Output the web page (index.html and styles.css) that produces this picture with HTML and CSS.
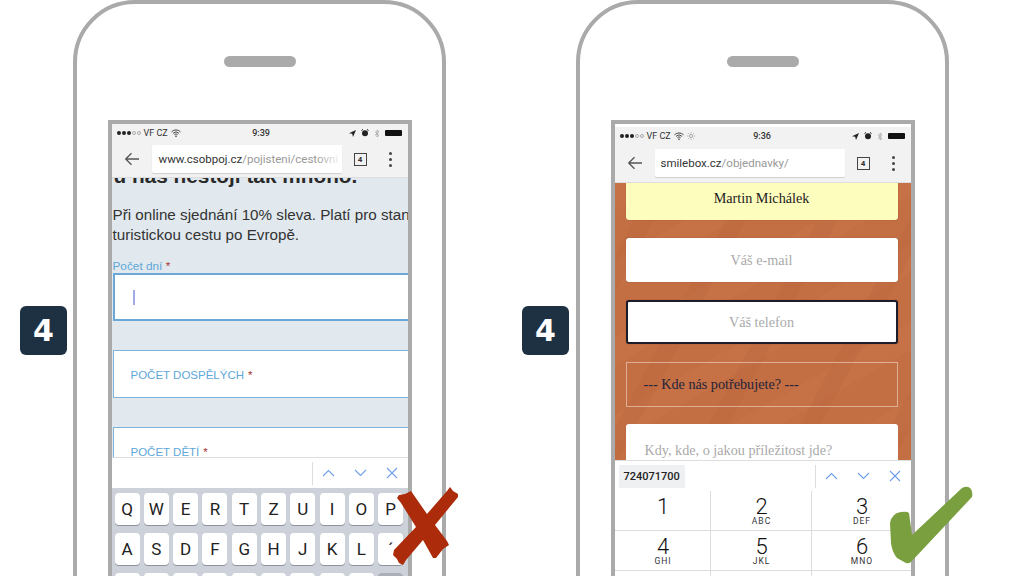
FILE: index.html
```html
<!DOCTYPE html>
<html lang="en">
<head>
<meta charset="UTF-8">
<title>Formuláře na mobilu</title>
<link rel="stylesheet" href="styles.css">
</head>
<body>

<div class="slide">

  <section class="panel panel-bad">
    <div class="badge">4</div>
    <div class="phone">
      <div class="speaker"></div>
      <div class="screen">
        <div class="status">
          <div class="status-side">
            <span class="signal"><i></i><i></i><i></i><i class="off"></i><i class="off"></i></span>
            <span>VF CZ</span>
            <svg class="wifi" width="10" height="8" viewBox="0 0 10 8"><path d="M.5 2.8a6.4 6.4 0 0 1 9 0M2 4.3a4.3 4.3 0 0 1 6 0M3.4 5.7a2.2 2.2 0 0 1 3.2 0" fill="none" stroke="#333" stroke-width=".9"/><circle cx="5" cy="7.2" r=".8" fill="#333"/></svg>
          </div>
          <span class="time">9:39</span>
          <div class="status-side status-right">
            <svg width="7" height="7" viewBox="0 0 7 7"><path d="M7 0 0 3.2l3.2.5L4 7z" fill="#222"/></svg>
            <svg width="8" height="8" viewBox="0 0 8 8"><circle cx="4" cy="4.3" r="3" fill="#222"/><path d="M.5 1.5 2 .4M7.500 1.500 6 .4" stroke="#222"/></svg>
            <svg width="6" height="9" viewBox="0 0 6 9"><path d="M.8 2.500 5 6.300 3 8V1l2 1.700L.8 6.500" fill="none" stroke="#999" stroke-width=".7"/></svg>
            <span class="battery"></span>
          </div>
        </div>
        <div class="toolbar">
          <svg class="back" width="16" height="14" viewBox="0 0 16 14"><path d="M15 7H2M7.500 1.200 1.700 7l5.800 5.800" fill="none" stroke="#555" stroke-width="1.300"/></svg>
          <div class="url url-long"><b>www.csobpoj.cz</b>/pojisteni/cestovni</div>
          <span class="tabs">4</span>
          <span class="menu"><i></i><i></i><i></i></span>
        </div>
        <div class="page page-csob">
          <h1 class="csob-title">u nás nestojí tak mnoho.</h1>
          <p class="csob-text">Při online sjednání 10% sleva. Platí pro stan<br>turistickou cestu po Evropě.</p>
          <div class="csob-label">Počet dní <em>*</em></div>
          <div class="csob-field csob-focus"><span class="caret"></span></div>
          <div class="csob-field">POČET DOSPĚLÝCH <em>*</em></div>
          <div class="csob-field">POČET DĚTÍ <em>*</em></div>
        </div>
        <div class="accessory">
          <span class="arrows">
            <svg width="13" height="8" viewBox="0 0 13 8"><path d="M1 7 6.500 1.500 12 7" fill="none" stroke="#6f9fe8" stroke-width="1.100"/></svg>
            <svg width="13" height="8" viewBox="0 0 13 8"><path d="M1 1l5.500 5.500L12 1" fill="none" stroke="#6f9fe8" stroke-width="1.100"/></svg>
            <svg width="12" height="12" viewBox="0 0 12 12"><path d="M1 1l10 10M11 1 1 11" fill="none" stroke="#6f9fe8" stroke-width="1.100"/></svg>
          </span>
        </div>
        <div class="keyboard">
          <span class="key">Q</span><span class="key">W</span><span class="key">E</span><span class="key">R</span><span class="key">T</span><span class="key">Z</span><span class="key">U</span><span class="key">I</span><span class="key">O</span><span class="key">P</span>
          <span class="key">A</span><span class="key">S</span><span class="key">D</span><span class="key">F</span><span class="key">G</span><span class="key">H</span><span class="key">J</span><span class="key">K</span><span class="key">L</span><span class="key">´</span>
          <span class="key"></span><span class="key"></span><span class="key"></span><span class="key"></span><span class="key"></span><span class="key"></span><span class="key"></span><span class="key"></span><span class="key"></span><span class="key key-dark"></span>
        </div>
      </div>
    </div>
  </section>

  <section class="panel panel-good">
    <div class="badge">4</div>
    <div class="phone">
      <div class="speaker"></div>
      <div class="screen screen-low">
        <div class="status">
          <div class="status-side">
            <span class="signal"><i></i><i></i><i></i><i class="off"></i><i class="off"></i></span>
            <span>VF CZ</span>
            <svg class="wifi" width="10" height="8" viewBox="0 0 10 8"><path d="M.5 2.8a6.4 6.4 0 0 1 9 0M2 4.3a4.3 4.3 0 0 1 6 0M3.4 5.7a2.2 2.2 0 0 1 3.2 0" fill="none" stroke="#333" stroke-width=".9"/><circle cx="5" cy="7.2" r=".8" fill="#333"/></svg>
            <svg width="8" height="8" viewBox="0 0 8 8"><circle cx="4" cy="4" r="1.600" fill="none" stroke="#888" stroke-width=".7"/><path d="M4 0v1.300M4 6.700V8M0 4h1.300M6.700 4H8M1.200 1.200l.9.9M5.900 5.900l.9.9M6.800 1.200l-.9.9M2.100 5.900l-.9.9" stroke="#888" stroke-width=".6"/></svg>
          </div>
          <span class="time">9:36</span>
          <div class="status-side status-right">
            <svg width="7" height="7" viewBox="0 0 7 7"><path d="M7 0 0 3.2l3.2.5L4 7z" fill="#222"/></svg>
            <svg width="8" height="8" viewBox="0 0 8 8"><circle cx="4" cy="4.3" r="3" fill="#222"/><path d="M.5 1.5 2 .4M7.500 1.500 6 .4" stroke="#222"/></svg>
            <svg width="6" height="9" viewBox="0 0 6 9"><path d="M.8 2.500 5 6.300 3 8V1l2 1.700L.8 6.500" fill="none" stroke="#999" stroke-width=".7"/></svg>
            <span class="battery"></span>
          </div>
        </div>
        <div class="toolbar toolbar-tall">
          <svg class="back" width="16" height="14" viewBox="0 0 16 14"><path d="M15 7H2M7.500 1.200 1.700 7l5.800 5.800" fill="none" stroke="#555" stroke-width="1.300"/></svg>
          <div class="url"><b>smilebox.cz</b>/objednavky/</div>
          <span class="tabs">4</span>
          <span class="menu"><i></i><i></i><i></i></span>
        </div>
        <div class="page page-smile">
          <div class="smile-field smile-filled">Martin Michálek</div>
          <div class="smile-field">Váš e-mail</div>
          <div class="smile-field smile-focus">Váš telefon</div>
          <div class="smile-select">--- Kde nás potřebujete? ---</div>
          <div class="smile-area">Kdy, kde, o jakou příležitost jde?</div>
        </div>
        <div class="accessory accessory-chip">
          <span class="chip">724071700</span>
          <span class="arrows">
            <svg width="13" height="8" viewBox="0 0 13 8"><path d="M1 7 6.500 1.500 12 7" fill="none" stroke="#6f9fe8" stroke-width="1.100"/></svg>
            <svg width="13" height="8" viewBox="0 0 13 8"><path d="M1 1l5.500 5.500L12 1" fill="none" stroke="#6f9fe8" stroke-width="1.100"/></svg>
            <svg width="12" height="12" viewBox="0 0 12 12"><path d="M1 1l10 10M11 1 1 11" fill="none" stroke="#6f9fe8" stroke-width="1.100"/></svg>
          </span>
        </div>
        <div class="keypad">
          <div class="pad"><span class="num">1</span></div>
          <div class="pad"><span class="num">2</span><span class="abc">ABC</span></div>
          <div class="pad"><span class="num">3</span><span class="abc">DEF</span></div>
          <div class="pad"><span class="num">4</span><span class="abc">GHI</span></div>
          <div class="pad"><span class="num">5</span><span class="abc">JKL</span></div>
          <div class="pad"><span class="num">6</span><span class="abc">MNO</span></div>
          <div class="pad"></div>
          <div class="pad"></div>
          <div class="pad"></div>
        </div>
      </div>
    </div>
  </section>

  <svg class="mark mark-cross" width="70" height="84" viewBox="390 484 70 84">
    <path d="M399 495l6-1 6-3 16 23 20-23 3-4 3 4 5 3v3l-23 28 12 16 2 4-6 4-7 9h-3l-10-18-17 20-3 5-4-2-2-4-4-4 1-5 22-23-15-24-4-5z" fill="#ab2b0a"/>
  </svg>
  <svg class="mark mark-check" width="86" height="80" viewBox="888 485 86 80">
    <path d="M962 488Q968 485 971 489Q973 493 972 497L911 562Q908 564 906 563L897 558Q892 552 891 543L890 523Q892 513 901 512Q907 511 909 513L912 535z" fill="#7a9f3f"/>
  </svg>

</div>

</body>
</html>
```

FILE: styles.css
```css
* {
    box-sizing: border-box;
}
html, body {
    margin: 0;
    padding: 0;
    height: 576px;
    overflow: hidden;
    background: #fff;
    font-family: "Liberation Sans", Arial, sans-serif;
}
.slide {
    position: relative;
    display: flex;
    width: 1024px;
    height: 576px;
    padding-left: 20px;
    gap: 76px;
    overflow: hidden;
}
.panel {
    display: flex;
    align-items: flex-start;
    gap: 6px;
}
.panel-good {
    gap: 7px;
}
.badge {
    width: 47px;
    height: 49px;
    margin-top: 306px;
    background: #1d3143;
    border-radius: 6px;
    color: #fff;
    font-family: "DejaVu Sans", sans-serif;
    font-weight: 700;
    font-size: 30px;
    line-height: 49px;
    text-align: center;
}

/* phone outline */
.phone {
    width: 373px;
    height: 720px;
    flex: none;
    border: 4px solid #aaa;
    border-radius: 62px;
    display: flex;
    flex-direction: column;
    align-items: center;
    background: #fff;
}
.speaker {
    width: 72px;
    height: 11px;
    margin-top: 52px;
    background: #aaa;
    border-radius: 6px;
}
.screen {
    width: 304px;
    height: 456px;
    margin-top: 53px;
    border: 4px solid #aaa;
    border-bottom: 0;
    display: flex;
    flex-direction: column;
    overflow: hidden;
    flex: none;
}
.screen-low {
    padding-top: 3px;
}

/* status bar */
.status {
    height: 18px;
    flex: none;
    background: #f2f2f2;
    display: flex;
    align-items: center;
    justify-content: space-between;
    padding: 0 6px 0 5px;
    font-family: Roboto, sans-serif;
    font-size: 9px;
    color: #333;
}
.status-side {
    width: 110px;
    display: flex;
    align-items: center;
    gap: 3px;
}
.status-right {
    justify-content: flex-end;
    gap: 5px;
}
.time {
    font-weight: 500;
}
.panel-bad .time {
    margin-left: 4px;
}
.signal {
    display: flex;
    gap: 1px;
}
.signal i {
    width: 4px;
    height: 4px;
    border-radius: 50%;
    background: #222;
}
.signal i.off {
    background: none;
    border: 1px solid #aaa;
}
.battery {
    width: 17px;
    height: 6px;
    background: #111;
    border-radius: 1px;
}

/* browser toolbar */
.toolbar {
    height: 36px;
    flex: none;
    background: #f2f2f2;
    display: flex;
    align-items: flex-start;
    padding: 3px 0 0 12px;
    border-bottom: 1px solid #ddd;
}
.toolbar-tall {
    height: 38px;
    padding-top: 4px;
}
.back {
    margin-top: 7px;
    flex: none;
}
.url {
    position: relative;
    width: 190px;
    height: 28px;
    margin-left: 12px;
    padding-left: 6px;
    background: #fff;
    border-radius: 2px;
    box-shadow: 0 1px 1px rgba(0, 0, 0, 0.15);
    font-family: Roboto, sans-serif;
    font-size: 11.500px;
    line-height: 28px;
    color: #999;
    white-space: nowrap;
    overflow: hidden;
}
.url-long {
    padding-left: 7px;
}
.url b {
    font-weight: 400;
    color: #333;
}
.url::after {
    content: "";
    position: absolute;
    top: 0;
    right: 0;
    width: 26px;
    height: 100%;
    background: linear-gradient(to right, rgba(255, 255, 255, 0), #fff);
}
.tabs {
    width: 13px;
    height: 13px;
    margin: 8px 0 0 12px;
    border: 1px solid #444;
    font-family: Roboto, sans-serif;
    font-size: 8px;
    font-weight: 700;
    line-height: 11px;
    text-align: center;
    color: #333;
    flex: none;
}
.menu {
    margin: 7px 0 0 22px;
    display: flex;
    flex-direction: column;
    gap: 3px;
}
.menu i {
    width: 3px;
    height: 3px;
    border-radius: 50%;
    background: #444;
}

.page {
    flex: 1;
    min-height: 0;
    overflow: hidden;
}

/* csob page */
.page-csob {
    background: #e1e9ef;
    padding-left: 1px;
}
.csob-title {
    margin: -14px 0 0 1px;
    font-size: 20.800px;
    line-height: 24px;
    color: #2a2a2a;
    white-space: nowrap;
}
.csob-text {
    margin: 17px 0 0;
    font-size: 15.200px;
    line-height: 20px;
    color: #333;
    white-space: nowrap;
}
.csob-label {
    margin-top: 14px;
    font-size: 11.800px;
    line-height: 14px;
    color: #5ea7d8;
}
.csob-label em, .csob-field em {
    font-style: normal;
    color: #a33;
}
.csob-field {
    height: 48px;
    margin-bottom: 29px;
    padding: 2px 0 0 17px;
    background: #fff;
    border: 1px solid #7fb3da;
    border-right: 0;
    font-size: 11.500px;
    line-height: 44px;
    color: #5ea7d8;
    display: flex;
    align-items: center;
    gap: 4px;
}
.csob-focus {
    height: 48px;
    padding: 0 0 0 18px;
    border: 2px solid #6aa8d8;
    border-right: 0;
}
.caret {
    width: 2px;
    height: 15px;
    background: #a3abe6;
}

/* accessory bar above keyboards */
.accessory {
    height: 31px;
    flex: none;
    background: #fff;
    border-top: 1px solid #ddd;
    display: flex;
    align-items: center;
    justify-content: flex-end;
}
.accessory-chip {
    justify-content: space-between;
    padding-left: 4px;
}
.arrows {
    height: 23px;
    width: 96px;
    flex: none;
    padding: 0 10px 0 9px;
    border-left: 1px solid #ddd;
    display: flex;
    align-items: center;
    justify-content: space-between;
}
.chip {
    height: 23px;
    padding: 0 5px;
    background: #eef0f1;
    font-family: Roboto, sans-serif;
    font-size: 11px;
    font-weight: 500;
    line-height: 23px;
    color: #222;
}

/* qwerty keyboard */
.keyboard {
    height: 88px;
    flex: none;
    padding: 5px 3px 0 3px;
    background: #cdd2da;
    display: grid;
    grid-template-columns: repeat(10, 25px);
    grid-auto-rows: 32px;
    column-gap: 4.3px;
    row-gap: 8px;
}
.key {
    background: #fff;
    border-radius: 4px;
    box-shadow: 0 1px 0 #8e9299;
    font-family: Roboto, sans-serif;
    font-size: 17px;
    line-height: 32px;
    text-align: center;
    color: #222;
}
.key-dark {
    background: #aab0ba;
}

/* number pad */
.keypad {
    height: 85px;
    flex: none;
    overflow: hidden;
    background: #fff;
    display: grid;
    grid-template-columns: 96px 101px 1fr;
    grid-auto-rows: 40px;
}
.pad {
    display: flex;
    flex-direction: column;
    align-items: center;
    padding-left: 2px;
    border-bottom: 1px solid #ddd;
    border-right: 1px solid #ddd;
    color: #111;
    font-family: Roboto, sans-serif;
}
.pad:nth-child(3n) {
    border-right: 0;
}
.num {
    font-size: 22px;
    font-weight: 300;
    line-height: 20px;
    margin-top: 6px;
}
.abc {
    font-size: 8.500px;
    letter-spacing: 1px;
    line-height: 9px;
    color: #333;
}

/* smilebox page */
.page-smile {
    background-color: #c46e43;
    background-image:
        repeating-linear-gradient(118deg, rgba(0, 0, 0, 0) 0 34px, rgba(120, 50, 20, 0.05) 34px 52px, rgba(0, 0, 0, 0) 52px 81px),
        repeating-linear-gradient(150deg, rgba(255, 200, 160, 0.03) 0 24px, rgba(0, 0, 0, 0) 24px 67px);
    padding: 0 13px 0 11px;
    font-family: "Liberation Serif", "Times New Roman", serif;
    font-size: 14.200px;
    text-align: center;
}
.smile-field {
    height: 44px;
    margin-bottom: 18px;
    background: #fff;
    border-radius: 3px;
    box-shadow: 0 0 1px rgba(0, 0, 0, 0.4);
    line-height: 44px;
    color: #aaa;
}
.smile-filled {
    height: 37px;
    line-height: 30px;
    background: #fdfdbd;
    color: #222;
    border-radius: 0 0 3px 3px;
}
.smile-focus {
    border: 2px solid #1d1d2a;
    line-height: 40px;
}
.smile-select {
    height: 45px;
    margin-bottom: 17px;
    padding-left: 17px;
    border: 1px solid rgba(255, 255, 255, 0.45);
    line-height: 43px;
    text-align: left;
    color: #23233a;
}
.smile-area {
    height: 60px;
    padding: 17px 0 0 19px;
    background: #fff;
    border-radius: 3px;
    text-align: left;
    line-height: 18px;
    color: #aaa;
}

/* red cross, green tick */
.mark {
    position: absolute;
}
.mark-cross {
    left: 390px;
    top: 484px;
}
.mark-check {
    left: 888px;
    top: 485px;
}
```
